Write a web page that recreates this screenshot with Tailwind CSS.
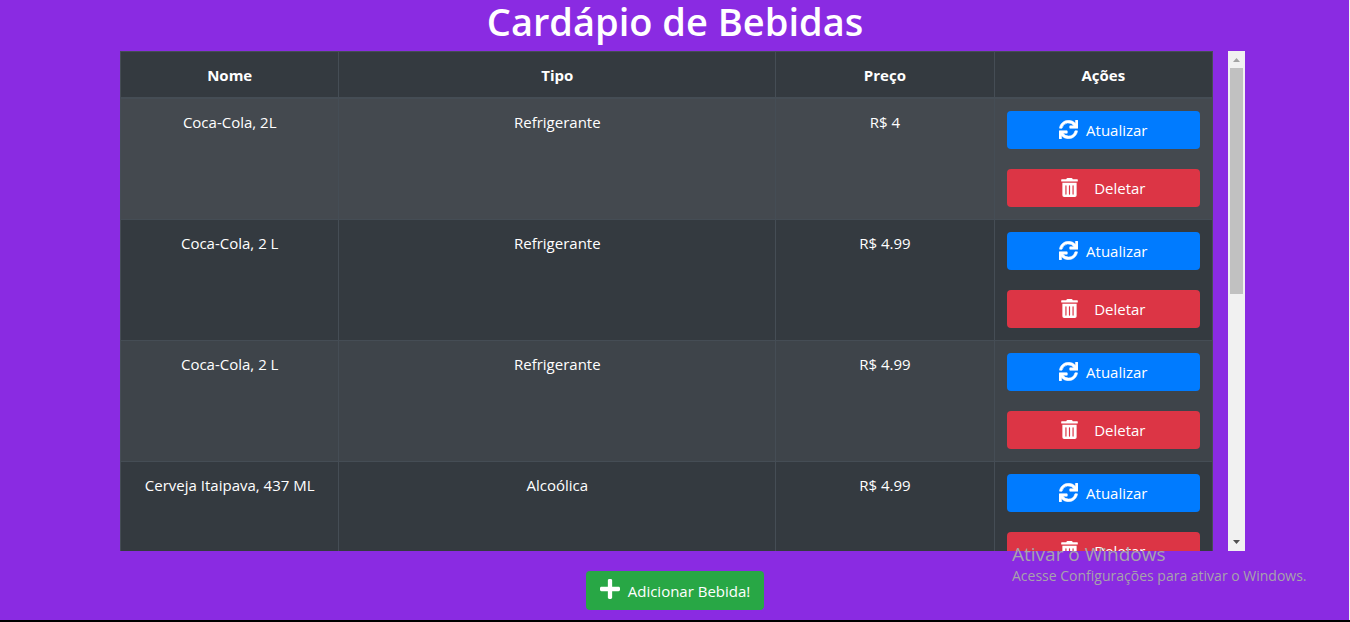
<!DOCTYPE html>
<html lang="pt-BR">
<head>
<meta charset="utf-8">
<title>Cardápio de Bebidas</title>
<script src="https://cdn.jsdelivr.net/npm/@tailwindcss/browser@4"></script>
</head>
<body class="relative min-h-screen flex flex-col bg-[#8a2be2] border-b-2 border-black font-['Open_Sans','Noto_Sans',sans-serif] text-[15px] leading-6 text-white">
<svg class="hidden">
  <symbol id="sync" viewBox="0 0 512 512"><path fill="currentColor" d="M440.65 12.57l4 82.77A247.16 247.16 0 0 0 255.83 8C134.73 8 33.91 94.92 12.29 209.82A12 12 0 0 0 24.09 224h49.05a12 12 0 0 0 11.67-9.26 175.91 175.91 0 0 1 317-56.94l-101.46-4.86a12 12 0 0 0-12.57 12v47.41a12 12 0 0 0 12 12H500a12 12 0 0 0 12-12V12a12 12 0 0 0-12-12h-47.37a12 12 0 0 0-11.98 12.57zM255.83 432a175.61 175.61 0 0 1-146-77.8l101.8 4.87a12 12 0 0 0 12.57-12v-47.4a12 12 0 0 0-12-12H12a12 12 0 0 0-12 12V500a12 12 0 0 0 12 12h47.35a12 12 0 0 0 12-12.6l-4.15-82.57A247.17 247.17 0 0 0 255.83 504c121.11 0 221.93-86.92 243.55-201.82a12 12 0 0 0-11.8-14.18h-49.05a12 12 0 0 0-11.67 9.26A175.86 175.86 0 0 1 255.83 432z" stroke="currentColor" stroke-width="14"/></symbol>
  <symbol id="trash" viewBox="0 0 448 512"><path fill="currentColor" d="M32 464a48 48 0 0 0 48 48h288a48 48 0 0 0 48-48V128H32zm272-256a16 16 0 0 1 32 0v224a16 16 0 0 1-32 0zm-96 0a16 16 0 0 1 32 0v224a16 16 0 0 1-32 0zm-96 0a16 16 0 0 1 32 0v224a16 16 0 0 1-32 0zM432 32H312l-9.4-18.7A24 24 0 0 0 281.1 0H166.8a23.72 23.72 0 0 0-21.4 13.3L136 32H16A16 16 0 0 0 0 48v32a16 16 0 0 0 16 16h416a16 16 0 0 0 16-16V48a16 16 0 0 0-16-16z"/></symbol>
  <symbol id="plus" viewBox="0 0 448 512"><path fill="currentColor" d="M416 208H272V64c0-17.67-14.33-32-32-32h-32c-17.67 0-32 14.33-32 32v144H32c-17.67 0-32 14.33-32 32v32c0 17.67 14.33 32 32 32h144v144c0 17.67 14.33 32 32 32h32c17.67 0 32-14.33 32-32V304h144c17.67 0 32-14.33 32-32v-32c0-17.67-14.33-32-32-32z"/></symbol>
</svg>

<h1 class="pb-[9px] text-center text-[38px] leading-[42px] font-semibold">Cardápio de Bebidas</h1>

<main class="mx-auto w-full max-w-[1140px] pl-[15px]">
  <div class="flex h-[500px] gap-[15px]">
    <div class="flex-1 overflow-hidden">
      <table class="w-full table-fixed border-collapse bg-[#343a40] text-center">
        <colgroup><col class="w-1/5"><col class="w-2/5"><col class="w-1/5"><col class="w-1/5"></colgroup>
        <thead>
          <tr class="[&>th]:border [&>th]:border-b-2 [&>th]:border-[#454d55] [&>th]:px-3 [&>th]:pt-[11px] [&>th]:pb-[10px] [&>th]:font-bold">
            <th scope="col">Nome</th><th scope="col">Tipo</th><th scope="col">Preço</th><th scope="col">Ações</th>
          </tr>
        </thead>
        <tbody class="[&_td]:border [&_td]:border-[#454d55] [&_td]:px-3 [&_td]:pt-[11px] [&_td]:pb-3 [&_td:last-child]:pt-3 [&_td]:align-top [&_button]:flex [&_button]:h-[38px] [&_button]:w-full [&_button]:items-center [&_button]:justify-center [&_button]:rounded">
          <tr class="bg-[#44494f]">
            <td>Coca-Cola, 2L</td><td>Refrigerante</td><td>R$ 4</td>
            <td>
              <button type="button" class="mb-5 gap-2 bg-[#007bff]"><svg class="mb-[2px] size-[19px]" aria-hidden="true"><use href="#sync"/></svg>Atualizar</button>
              <button type="button" class="gap-4 bg-[#dc3545]"><svg class="mb-[2px] h-[19px] w-[17px]" aria-hidden="true"><use href="#trash"/></svg>Deletar</button>
            </td>
          </tr>
          <tr>
            <td>Coca-Cola, 2 L</td><td>Refrigerante</td><td>R$ 4.99</td>
            <td>
              <button type="button" class="mb-5 gap-2 bg-[#007bff]"><svg class="mb-[2px] size-[19px]" aria-hidden="true"><use href="#sync"/></svg>Atualizar</button>
              <button type="button" class="gap-4 bg-[#dc3545]"><svg class="mb-[2px] h-[19px] w-[17px]" aria-hidden="true"><use href="#trash"/></svg>Deletar</button>
            </td>
          </tr>
          <tr class="bg-[#3e444a]">
            <td>Coca-Cola, 2 L</td><td>Refrigerante</td><td>R$ 4.99</td>
            <td>
              <button type="button" class="mb-5 gap-2 bg-[#007bff]"><svg class="mb-[2px] size-[19px]" aria-hidden="true"><use href="#sync"/></svg>Atualizar</button>
              <button type="button" class="gap-4 bg-[#dc3545]"><svg class="mb-[2px] h-[19px] w-[17px]" aria-hidden="true"><use href="#trash"/></svg>Deletar</button>
            </td>
          </tr>
          <tr>
            <td>Cerveja Itaipava, 437 ML</td><td>Alcoólica</td><td>R$ 4.99</td>
            <td>
              <button type="button" class="mb-5 gap-2 bg-[#007bff]"><svg class="mb-[2px] size-[19px]" aria-hidden="true"><use href="#sync"/></svg>Atualizar</button>
              <button type="button" class="gap-4 bg-[#dc3545]"><svg class="mb-[2px] h-[19px] w-[17px]" aria-hidden="true"><use href="#trash"/></svg>Deletar</button>
            </td>
          </tr>
        </tbody>
      </table>
    </div>
    <div class="flex w-[17px] flex-col items-center bg-[#f1f1f1]" aria-hidden="true">
      <svg class="size-[17px] shrink-0" viewBox="0 0 17 17"><path fill="#a3a3a3" d="M5 11h7L8.500 7z"/></svg>
      <div class="h-[226px] w-[13px] bg-[#c1c1c1]"></div>
      <svg class="mt-auto size-[17px] shrink-0" viewBox="0 0 17 17"><path fill="#505050" d="M5 6h7L8.500 10z"/></svg>
    </div>
  </div>
</main>

<div class="flex justify-center pt-5 pb-2">
  <button type="button" class="flex h-[39px] items-center gap-2 rounded bg-[#28a745] px-[14px]"><svg class="mb-1 h-6 w-5" aria-hidden="true"><use href="#plus"/></svg>Adicionar Bebida!</button>
</div>

<aside class="absolute right-[38px] bottom-[34px] w-[300px] whitespace-nowrap text-[#a7a3ab]">
  <p class="text-[19px] leading-6">Ativar o Windows</p>
  <p class="text-[14px] leading-5">Acesse Configurações para ativar o Windows.</p>
</aside>
<div class="absolute inset-y-0 right-0 w-px bg-[#f1f1f1]"></div>
</body>
</html>
